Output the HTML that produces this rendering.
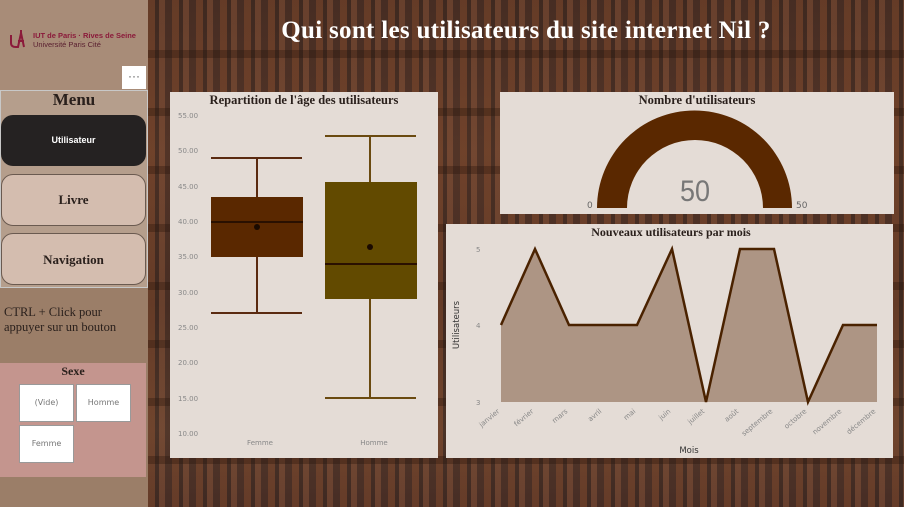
<!DOCTYPE html>
<html><head><meta charset="utf-8"><style>
body{margin:0;width:904px;height:507px;overflow:hidden;font-family:"Liberation Serif",serif;position:relative;
background:linear-gradient(180deg,#4a3026 0%,#5a3a2c 30%,#4a3026 60%,#5a3e30 85%,#4a3028 100%);}
.abs{position:absolute}
.panel{position:absolute;background:#e4dcd6}
</style></head><body>
<div class="abs" style="left:148px;top:0;width:756px;height:507px;background:repeating-linear-gradient(90deg,rgba(150,80,40,.35) 0 7px,rgba(30,20,15,.25) 7px 11px,rgba(170,100,60,.3) 11px 17px,rgba(60,35,25,.25) 17px 24px);"></div>
<div class="abs" style="left:148px;top:0;width:756px;height:507px;background:repeating-linear-gradient(180deg,rgba(0,0,0,0) 0 50px,rgba(40,20,10,.35) 50px 58px);"></div>
<!-- sidebar -->
<div class="abs" style="left:0;top:0;width:148px;height:507px;background:#9b7e68"></div>
<div class="abs" style="left:0;top:0;width:148px;height:90px;background:#a88c78"></div>
<svg class="abs" style="left:9px;top:29px" width="22" height="20"><path d="M2 6 V14 Q2 18 7 18 H9 L12 4 L15 18 M12 4 V1 M9 12 H15" fill="none" stroke="#8b1a3a" stroke-width="2"/></svg>
<div class="abs" style="left:33px;top:31px;color:#8b1a3a;font:bold 7.5px 'Liberation Sans',sans-serif;line-height:9px">IUT de Paris · Rives de Seine<br><span style="font-weight:normal;color:#5a2030">Université Paris Cité</span></div>
<div class="abs" style="left:122px;top:66px;width:24px;height:23px;background:#fff;color:#555;font:12px sans-serif;text-align:center;line-height:20px">···</div>
<div class="abs" style="left:0;top:90px;width:146px;height:196px;background:#b59e8c;border:1px solid #c8c8c8"></div>
<div class="abs" style="left:0;top:90px;width:148px;text-align:center;font-weight:bold;font-size:17px;color:#2a201c">Menu</div>
<div class="abs" style="left:1px;top:115px;width:145px;height:51px;background:#252222;border-radius:12px;color:#fff;font:bold 9px 'Liberation Sans',sans-serif;text-align:center;line-height:51px">Utilisateur</div>
<div class="abs" style="left:1px;top:174px;width:143px;height:50px;background:#d4bdaf;border:1px solid #6a5a50;border-radius:12px;text-align:center;line-height:50px;font-weight:bold;font-size:13px;color:#2a201c">Livre</div>
<div class="abs" style="left:1px;top:233px;width:143px;height:50px;background:#d4bdaf;border:1px solid #6a5a50;border-radius:12px;text-align:center;line-height:52px;font-weight:bold;font-size:13px;color:#2a201c">Navigation</div>
<div class="abs" style="left:4px;top:305px;font-size:12.5px;line-height:15px;color:#2a201c">CTRL + Click pour<br>appuyer sur un bouton</div>
<div class="abs" style="left:0;top:363px;width:146px;height:114px;background:#c4958e"></div>
<div class="abs" style="left:0;top:364px;width:146px;text-align:center;font-weight:bold;font-size:12px;color:#2a201c">Sexe</div>
<div class="abs" style="left:19px;top:384px;width:53px;height:36px;background:#fff;border:1px solid #999;font:8px 'DejaVu Sans',sans-serif;color:#777;text-align:center;line-height:36px">(Vide)</div>
<div class="abs" style="left:76px;top:384px;width:53px;height:36px;background:#fff;border:1px solid #999;font:8px 'DejaVu Sans',sans-serif;color:#777;text-align:center;line-height:36px">Homme</div>
<div class="abs" style="left:19px;top:425px;width:53px;height:36px;background:#fff;border:1px solid #999;font:8px 'DejaVu Sans',sans-serif;color:#777;text-align:center;line-height:36px">Femme</div>
<!-- title -->
<div class="abs" style="left:148px;top:17px;width:756px;text-align:center;color:#fff;font-weight:bold;font-size:25px;letter-spacing:0.3px">Qui sont les utilisateurs du site internet Nil ?</div>
<!-- box plot -->
<div class="panel" style="left:170px;top:92px;width:268px;height:366px"></div>
<svg class="abs" style="left:0;top:0" width="904" height="507">
<text x="304" y="104" text-anchor="middle" font-family="Liberation Serif" font-weight="bold" font-size="12.5" fill="#2a201c">Repartition de l'âge des utilisateurs</text>
<g font-family="DejaVu Sans" font-size="7" fill="#888">
<text x="178" y="118">55.00</text><text x="178" y="153">50.00</text><text x="178" y="189">45.00</text><text x="178" y="224">40.00</text><text x="178" y="259">35.00</text><text x="178" y="295">30.00</text><text x="178" y="330">25.00</text><text x="178" y="365">20.00</text><text x="178" y="401">15.00</text><text x="178" y="436">10.00</text>
<text x="260" y="445" text-anchor="middle">Femme</text><text x="374" y="445" text-anchor="middle">Homme</text></g>
<g stroke="#5a2a10" stroke-width="2"><line x1="257" y1="158" x2="257" y2="313"/><line x1="211" y1="158" x2="302" y2="158"/><line x1="211" y1="313" x2="302" y2="313"/></g>
<rect x="211" y="197" width="92" height="60" fill="#5a2800"/>
<line x1="211" y1="222" x2="303" y2="222" stroke="#2a1000" stroke-width="2"/>
<circle cx="257" cy="227" r="3" fill="#1a0a00"/>
<g stroke="#6a4a10" stroke-width="2"><line x1="370" y1="136" x2="370" y2="398"/><line x1="325" y1="136" x2="416" y2="136"/><line x1="325" y1="398" x2="416" y2="398"/></g>
<rect x="325" y="182" width="92" height="117" fill="#624a00"/>
<line x1="325" y1="264" x2="417" y2="264" stroke="#2a1000" stroke-width="2"/>
<circle cx="370" cy="247" r="3" fill="#1a0a00"/>
</svg>
<!-- gauge -->
<div class="panel" style="left:500px;top:92px;width:394px;height:122px"></div>
<svg class="abs" style="left:0;top:0" width="904" height="507">
<text x="697" y="104" text-anchor="middle" font-family="Liberation Serif" font-weight="bold" font-size="12.5" fill="#2a201c">Nombre d'utilisateurs</text>
<path d="M597 208 A97.5 97.5 0 0 1 792 208 L763 208 A68 68 0 0 0 627 208 Z" fill="#5a2800"/>
<text x="695" y="201" text-anchor="middle" font-family="Liberation Sans" font-size="30" fill="#777" textLength="30" lengthAdjust="spacingAndGlyphs">50</text>
<text x="587" y="208" font-family="DejaVu Sans" font-size="9" fill="#666">0</text>
<text x="796" y="208" font-family="DejaVu Sans" font-size="9" fill="#666">50</text>
</svg>
<!-- area chart -->
<div class="panel" style="left:446px;top:224px;width:447px;height:234px"></div>
<svg class="abs" style="left:0;top:0" width="904" height="507">
<text x="671" y="236" text-anchor="middle" font-family="Liberation Serif" font-weight="bold" font-size="12" fill="#2a201c">Nouveaux utilisateurs par mois</text>
<g font-family="DejaVu Sans" font-size="7" fill="#888"><text x="476" y="252">5</text><text x="476" y="328">4</text><text x="476" y="405">3</text></g>
<text transform="translate(459,325) rotate(-90)" text-anchor="middle" font-family="DejaVu Sans" font-size="8.5" fill="#333">Utilisateurs</text>
<text x="689" y="453" text-anchor="middle" font-family="DejaVu Sans" font-size="8.5" fill="#333">Mois</text>
<path d="M501 402 L501 325 L535 249 L569 325 L603 325 L637 325 L672 249 L706 402 L740 249 L774 249 L808 402 L843 325 L877 325 L877 402 Z" fill="#ad9584"/>
<polyline points="501,325 535,249 569,325 603,325 637,325 672,249 706,402 740,249 774,249 808,402 843,325 877,325" fill="none" stroke="#4a2200" stroke-width="2.5"/>
<g font-family="DejaVu Sans" font-size="7" fill="#888" text-anchor="end">
<text transform="translate(500,412) rotate(-40)">janvier</text>
<text transform="translate(534,412) rotate(-40)">février</text>
<text transform="translate(568,412) rotate(-40)">mars</text>
<text transform="translate(602,412) rotate(-40)">avril</text>
<text transform="translate(636,412) rotate(-40)">mai</text>
<text transform="translate(671,412) rotate(-40)">juin</text>
<text transform="translate(705,412) rotate(-40)">juillet</text>
<text transform="translate(739,412) rotate(-40)">août</text>
<text transform="translate(773,412) rotate(-40)">septembre</text>
<text transform="translate(807,412) rotate(-40)">octobre</text>
<text transform="translate(842,412) rotate(-40)">novembre</text>
<text transform="translate(876,412) rotate(-40)">décembre</text></g>
</svg>
</body></html>
